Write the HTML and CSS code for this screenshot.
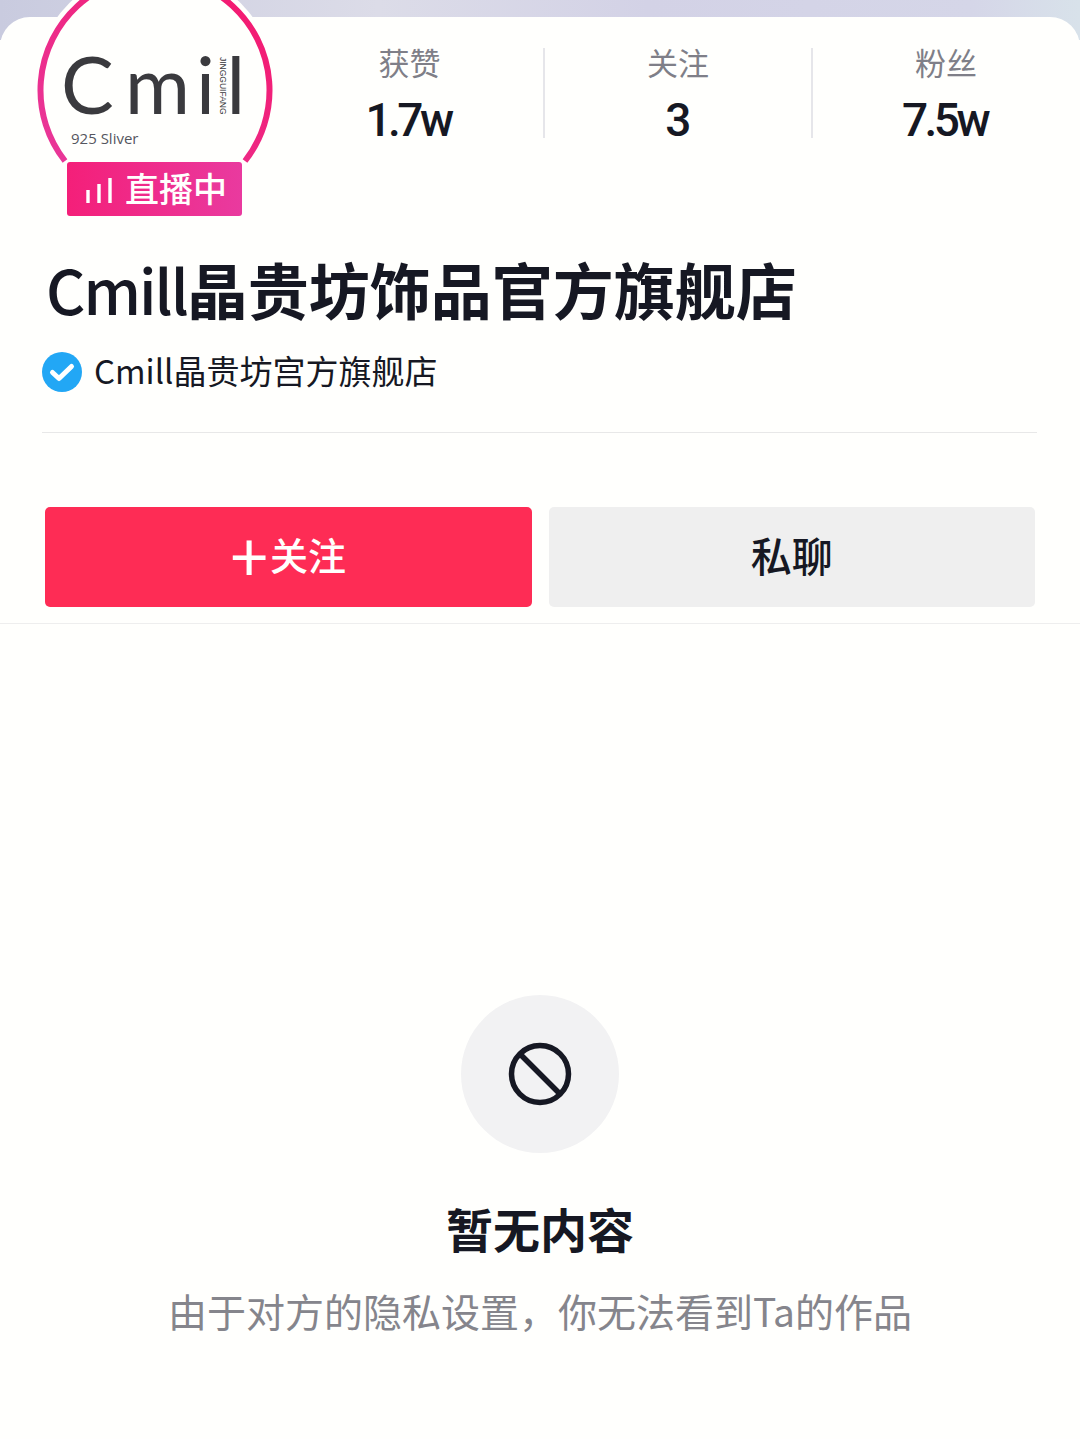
FILE: index.html
```html
<!DOCTYPE html>
<html lang="zh-CN">
<head>
    <meta charset="UTF-8">
    <meta name="viewport" content="width=device-width, initial-scale=1.0">
    <title>Cmill晶贵坊饰品官方旗舰店</title>
    <link rel="stylesheet" href="styles.css">
</head>
<body>
    <main class="page">
        <div class="card">
            <div class="avatar">
                <svg class="avatar-ring" width="250" height="250" viewBox="0 0 250 250">
                    <circle cx="125" cy="125" r="122" fill="#fffffd"/>
                    <path d="M 35 196 A 114.5 114.5 0 1 1 215 196" fill="none" stroke="url(#ringGrad)" stroke-width="6"/>
                    <defs>
                        <linearGradient id="ringGrad" x1="0" y1="1" x2="1" y2="0">
                            <stop offset="0" stop-color="#e8389a"/>
                            <stop offset="1" stop-color="#f5166b"/>
                        </linearGradient>
                    </defs>
                </svg>
                <div class="logo">
                    <span class="logo-c">C</span>
                    <span class="logo-m">m</span>
                    <span class="logo-i">i</span>
                    <span class="logo-side">JINGGUIFANG</span>
                    <span class="logo-l">l</span>
                </div>
                <p class="logo-sub">925 Sliver</p>
                <div class="live-badge">
                    <svg width="28" height="28" viewBox="0 0 28 28">
                        <path d="M3 15v13M14 9v19M25 3v25" stroke="#fff" stroke-width="3.4" fill="none"/>
                    </svg>
                    <span class="live-text">直播中</span>
                </div>
            </div>

            <div class="stats">
                <div class="stat">
                    <p class="stat-label">获赞</p>
                    <p class="stat-value">1.7w</p>
                </div>
                <div class="stat">
                    <p class="stat-label">关注</p>
                    <p class="stat-value">3</p>
                </div>
                <div class="stat">
                    <p class="stat-label">粉丝</p>
                    <p class="stat-value">7.5w</p>
                </div>
            </div>

            <div class="info">
                <h1 class="name"><span class="name-latin">Cmill</span>晶贵坊饰品官方旗舰店</h1>
                <div class="verified">
                    <svg class="verified-icon" width="40" height="40" viewBox="0 0 40 40">
                        <circle cx="20" cy="20" r="20" fill="#22a7f5"/>
                        <path d="M10.5 20.5l6.5 6 12.5-12" stroke="#fff" stroke-width="5" stroke-linecap="round" stroke-linejoin="round" fill="none"/>
                    </svg>
                    <span>Cmill晶贵坊宫方旗舰店</span>
                </div>
            </div>

            <div class="actions">
                <button class="btn btn-follow"><span class="btn-plus">+</span>关注</button>
                <button class="btn btn-chat">私聊</button>
            </div>
        </div>

        <section class="empty">
            <div class="empty-icon">
                <svg width="64" height="64" viewBox="0 0 64 64">
                    <circle cx="32" cy="32" r="28.5" stroke="#161823" stroke-width="5.5" fill="none"/>
                    <path d="M12 12l40 40" stroke="#161823" stroke-width="5.5" fill="none"/>
                </svg>
            </div>
            <h2 class="empty-title">暂无内容</h2>
            <p class="empty-text">由于对方的隐私设置，你无法看到Ta的作品</p>
        </section>
    </main>
</body>
</html>
```

FILE: styles.css
```css
* {
    margin: 0;
    box-sizing: border-box;
}
html, body {
    width: 100%;
    height: 100%;
}
body {
    overflow: hidden;
    background-color: #fffffd;
    font-family: "Noto Sans CJK SC", "Noto Sans", sans-serif;
    color: #161823;
}
.page {
    display: flex;
    flex-direction: column;
    height: 1439px;
    padding-top: 17px;
    background-image: linear-gradient(to right, #c9cbdf, #dcdce8 35%, #d3d2e6 60%, #d5d6e8 90%, #d8e2ea);
    background-size: 100% 40px;
    background-repeat: no-repeat;
    background-color: #fffffd;
}
.card {
    position: relative;
    display: flex;
    flex-direction: column;
    background-color: #fffffd;
    border-radius: 30px 30px 0 0;
    border-bottom: 1px solid #eeeeee;
    height: 607px;
}

/* avatar hangs over the top edge of the card */
.avatar {
    position: absolute;
    left: 30px;
    top: -52px;
    width: 250px;
    height: 250px;
}
.avatar-ring {
    position: absolute;
    left: 0;
    top: 0;
}
.logo {
    position: absolute;
    left: 31px;
    top: 88px;
    display: flex;
    align-items: flex-end;
    height: 70px;
    font-family: "Lato", sans-serif;
    font-weight: 400;
    color: #3a3a3e;
    line-height: 1;
}
.logo-c {
    font-size: 79px;
    width: 64px;
}
.logo-m {
    font-size: 79px;
    width: 71px;
}
.logo-i {
    font-size: 79px;
    width: 18px;
}
.logo-side {
    writing-mode: vertical-rl;
    font-family: "Liberation Sans", sans-serif;
    font-size: 8.5px;
    width: 12.5px;
    margin-bottom: 8px;
}
.logo-l {
    font-size: 79px;
}
.logo-sub {
    position: absolute;
    left: 41px;
    top: 163px;
    font-family: "Open Sans", sans-serif;
    font-size: 15px;
    color: #55565f;
}
.live-badge {
    position: absolute;
    left: 37px;
    top: 197px;
    width: 175px;
    height: 54px;
    display: flex;
    align-items: center;
    gap: 12px;
    padding-left: 18px;
    border-radius: 3px;
    background-image: linear-gradient(to right, #f41f79, #e93a9f);
    color: #fffffd;
    font-size: 34px;
    font-weight: 500;
}
.live-badge svg {
    flex: none;
}
.live-text {
    padding-bottom: 4px;
}

.stats {
    display: grid;
    grid-template-columns: 267px 268px 268px;
    margin-left: 276px;
    padding-top: 31px;
}
.stat {
    display: flex;
    flex-direction: column;
    align-items: center;
    height: 90px;
    border-left: 2px solid #e6e6ea;
}
.stat:first-child {
    border-left: none;
}
.stat-label {
    font-size: 31px;
    line-height: 33px;
    margin-top: -3px;
    color: #7f7f88;
}
.stat-value {
    font-family: "Roboto", sans-serif;
    font-size: 46px;
    font-weight: 500;
    letter-spacing: -3.5px;
    line-height: 54px;
    margin-top: 15px;
    padding-right: 3px;
}

.info {
    margin: 0 43px 0 42px;
    padding: 115px 0 40px;
    border-bottom: 1px solid #e8e8e8;
}
.name {
    font-size: 61px;
    font-weight: 700;
    line-height: 72px;
    padding-left: 4px;
    white-space: nowrap;
}
.name-latin {
    font-weight: 500;
    letter-spacing: -2px;
}
.verified {
    display: flex;
    align-items: center;
    gap: 12px;
    margin-top: 23px;
    font-size: 33px;
    line-height: 44px;
}
.verified-icon {
    margin-top: 4px;
}

.actions {
    display: flex;
    gap: 17px;
    margin: 74px 45px 0;
}
.btn {
    flex: 1;
    display: flex;
    align-items: center;
    justify-content: center;
    height: 100px;
    padding: 0 0 7px;
    border: none;
    border-radius: 5px;
    font-family: inherit;
    font-weight: 500;
}
.btn-follow {
    background-color: #fe2c55;
    color: #fffffd;
    font-size: 38px;
}
.btn-plus {
    font-size: 68px;
    font-weight: 400;
    line-height: 1;
    margin-right: 2px;
}
.btn-chat {
    background-color: #efefef;
    color: #161823;
    font-size: 41px;
}

.empty {
    display: flex;
    flex-direction: column;
    align-items: center;
    padding-top: 371px;
}
.empty-icon {
    width: 158px;
    height: 158px;
    border-radius: 50%;
    background-color: #f2f2f3;
    display: flex;
    align-items: center;
    justify-content: center;
}
.empty-title {
    font-size: 47px;
    font-weight: 700;
    line-height: 60px;
    margin-top: 45px;
}
.empty-text {
    font-size: 39px;
    line-height: 50px;
    color: #85858c;
    margin-top: 27px;
    white-space: nowrap;
}
```
